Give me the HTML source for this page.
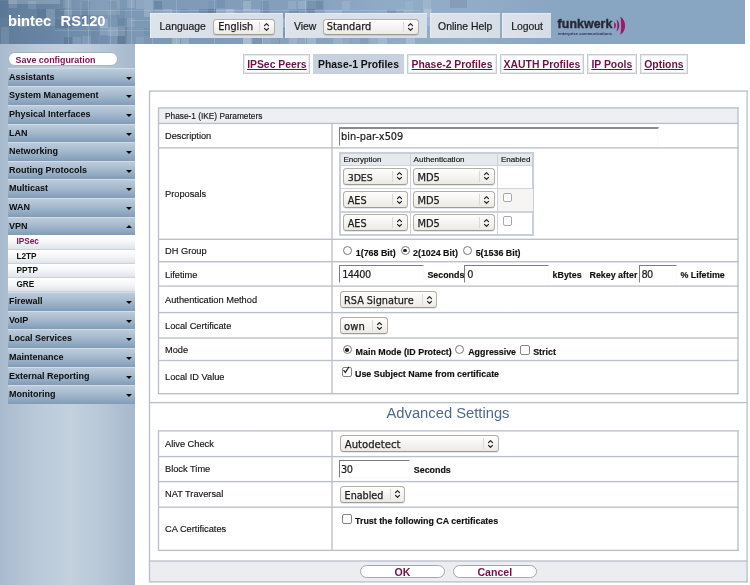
<!DOCTYPE html>
<html>
<head>
<meta charset="utf-8">
<title>bintec RS120 - IPSec Phase-1 Profiles</title>
<style>
html,body{margin:0;padding:0;}
html{background:#fff;}
body{width:750px;height:585px;position:relative;overflow:hidden;background:#fff;will-change:transform;font-family:"Liberation Sans",sans-serif;color:#1a1a1a;}
.abs{position:absolute;}
/* header */
#hdr{position:absolute;left:0;top:0;width:745px;height:44px;background:#88a5c2;overflow:hidden;}
#hdrtex{position:absolute;left:0;top:0;width:560px;height:44px;overflow:hidden;background:linear-gradient(90deg,#5f7c9a 0,#6886a4 50px,#7a97b4 115px,#84a0bd 300px,#8faac5 380px,#92adc7 470px,#88a5c2 560px);}
#hdrtex i{position:absolute;display:block;}
#brand{position:absolute;left:8px;top:12.6px;word-spacing:0.6px;font-size:14.7px;font-weight:bold;color:#fff;white-space:pre;line-height:17px;}
.tb{position:absolute;top:12.6px;height:25px;background:linear-gradient(90deg,#dce3eb,#d5dde7);border-top:1px solid #e8edf3;border-left:1px solid #e8edf3;box-sizing:border-box;font-size:10.4px;color:#1a1a1a;-webkit-text-stroke:0.2px #1a1a1a;line-height:25px;white-space:nowrap;}
.sel{position:absolute;box-sizing:border-box;border:1px solid #b3aea6;border-bottom-color:#a09b93;border-radius:3.5px;box-shadow:0 0.8px 0.6px rgba(0,0,0,0.12);background:linear-gradient(#fefefd,#eceae6);font-family:"DejaVu Sans","Liberation Sans",sans-serif;color:#1c1c1c;-webkit-text-stroke:0.25px #1c1c1c;white-space:nowrap;}
.sel.s2{height:17px;font-size:9.7px;line-height:17.2px;padding-left:3.5px;}
.sel b{position:absolute;right:0;top:2px;bottom:2px;width:13.4px;border-left:1px solid #dcd9d3;}
.sel svg{position:absolute;right:4.3px;top:50%;margin-top:-4px;width:5px;height:8px;overflow:visible;}
/* sidebar */
#side{position:absolute;left:0;top:44px;width:135px;height:541px;background:linear-gradient(90deg,#a8bacd 0,#b9c9d9 35px,#c3d1de 70px,#b8c8d8 100px,#a6b8cc 135px);}
#save{position:absolute;left:8px;top:8.4px;width:110px;height:13.2px;border:1px solid #aab4c0;border-radius:7px;background:#fff;box-sizing:border-box;font-size:8.9px;font-weight:bold;color:#781050;line-height:14.2px;padding-left:6.6px;}
.mi{position:absolute;left:8px;width:127px;height:18px;background:linear-gradient(#bccbdb 0,#a5b9cd 45%,#819cb8 100%);border-top:1px solid #d3dde8;box-sizing:border-box;font-size:9px;font-weight:bold;color:#0c0c0c;line-height:17.8px;padding-left:1px;white-space:nowrap;}
.mi:after{content:"";position:absolute;right:2.6px;top:8px;border:3px solid transparent;border-top:3px solid #0a0a0a;border-bottom:0;}
.mi.up:after{border-top:0;border-bottom:3px solid #0a0a0a;top:7.5px;}
.si{position:absolute;left:8px;width:127px;height:14px;background:linear-gradient(#ffffff 0,#f6f7f8 45%,#e0e4e9 100%);border-bottom:1px solid #ccd2da;box-sizing:border-box;font-size:8.25px;font-weight:bold;color:#111;line-height:13.2px;padding-left:8.4px;}
.si.act{color:#801456;}
/* main */
.tab{position:absolute;top:54px;height:20px;box-sizing:border-box;border:1px solid #c6cbd3;box-shadow:inset 0 0 0 1px rgba(198,203,211,0.4);background:#fff;font-size:10.4px;font-weight:bold;color:#701048;text-decoration:underline;line-height:19px;text-align:center;white-space:nowrap;}
.tab.act{background:#c8d2de;border-color:#c8d2de;box-shadow:none;color:#111;text-decoration:none;}
.ln{position:absolute;background:#c4ccd8;}
.lbl{position:absolute;left:165px;font-size:9.25px;color:#141414;-webkit-text-stroke:0.15px #141414;white-space:nowrap;line-height:12px;}
.bt{position:absolute;font-size:8.9px;font-weight:bold;color:#111;-webkit-text-stroke:0.15px #111;white-space:nowrap;line-height:12px;}
.inp{position:absolute;box-sizing:border-box;height:18px;border-top:1.5px solid #7d7d7d;border-left:1.5px solid #7d7d7d;border-right:1px solid #fbfbfb;border-bottom:1px solid #fbfbfb;background:#fff;font-family:"DejaVu Sans","Liberation Sans",sans-serif;font-size:9.8px;line-height:15px;padding-left:2px;color:#1c1c1c;-webkit-text-stroke:0.2px #1c1c1c;}
.rad{position:absolute;width:9px;height:9px;border:1px solid #787878;border-radius:50%;box-sizing:border-box;background:#fff;}
.rad.on:after{content:"";position:absolute;left:1.7px;top:1.7px;width:3.6px;height:3.6px;border-radius:50%;background:#222;}
.chk{position:absolute;width:9.4px;height:9.4px;border:1px solid #858585;border-radius:2px;box-sizing:border-box;background:#fff;}
.btn{position:absolute;top:565.4px;height:12.8px;box-sizing:border-box;border:1px solid #a2a8b2;border-radius:7px;background:#fff;font-size:10.6px;font-weight:bold;color:#701048;text-align:center;line-height:12.4px;}
</style>
</head>
<body>
<!-- HEADER -->
<div id="hdr">
  <div id="hdrtex"><i style="left:0px;top:1px;width:8px;height:17px;background:rgba(30,50,80,0.06)"></i><i style="left:1px;top:27px;width:8px;height:17px;background:rgba(255,255,255,0.10)"></i><i style="left:9px;top:0px;width:8px;height:8px;background:rgba(255,255,255,0.12)"></i><i style="left:9px;top:18px;width:17px;height:8px;background:rgba(255,255,255,0.15)"></i><i style="left:19px;top:19px;width:8px;height:8px;background:rgba(255,255,255,0.15)"></i><i style="left:28px;top:1px;width:8px;height:8px;background:rgba(255,255,255,0.11)"></i><i style="left:28px;top:18px;width:8px;height:8px;background:rgba(255,255,255,0.09)"></i><i style="left:37px;top:9px;width:9px;height:9px;background:rgba(30,50,80,0.12)"></i><i style="left:46px;top:9px;width:9px;height:17px;background:rgba(255,255,255,0.12)"></i><i style="left:55px;top:9px;width:9px;height:8px;background:rgba(30,50,80,0.09)"></i><i style="left:55px;top:19px;width:17px;height:9px;background:rgba(30,50,80,0.14)"></i><i style="left:63px;top:0px;width:8px;height:8px;background:rgba(255,255,255,0.08)"></i><i style="left:64px;top:10px;width:8px;height:9px;background:rgba(255,255,255,0.08)"></i><i style="left:64px;top:37px;width:8px;height:17px;background:rgba(30,50,80,0.14)"></i><i style="left:72px;top:0px;width:8px;height:17px;background:rgba(30,50,80,0.06)"></i><i style="left:72px;top:9px;width:8px;height:9px;background:rgba(30,50,80,0.06)"></i><i style="left:73px;top:37px;width:8px;height:17px;background:rgba(255,255,255,0.10)"></i><i style="left:82px;top:1px;width:8px;height:17px;background:rgba(30,50,80,0.10)"></i><i style="left:81px;top:9px;width:8px;height:9px;background:rgba(30,50,80,0.10)"></i><i style="left:82px;top:18px;width:9px;height:8px;background:rgba(30,50,80,0.15)"></i><i style="left:82px;top:36px;width:9px;height:8px;background:rgba(255,255,255,0.10)"></i><i style="left:91px;top:28px;width:8px;height:17px;background:rgba(30,50,80,0.07)"></i><i style="left:100px;top:19px;width:8px;height:9px;background:rgba(255,255,255,0.21)"></i><i style="left:100px;top:27px;width:8px;height:8px;background:rgba(255,255,255,0.11)"></i><i style="left:100px;top:36px;width:9px;height:8px;background:rgba(30,50,80,0.06)"></i><i style="left:109px;top:1px;width:8px;height:17px;background:rgba(30,50,80,0.09)"></i><i style="left:108px;top:10px;width:8px;height:8px;background:rgba(255,255,255,0.08)"></i><i style="left:108px;top:27px;width:17px;height:9px;background:rgba(255,255,255,0.15)"></i><i style="left:117px;top:9px;width:8px;height:17px;background:rgba(30,50,80,0.07)"></i><i style="left:118px;top:18px;width:9px;height:8px;background:rgba(30,50,80,0.09)"></i><i style="left:118px;top:27px;width:9px;height:17px;background:rgba(30,50,80,0.14)"></i><i style="left:117px;top:36px;width:8px;height:17px;background:rgba(30,50,80,0.12)"></i><i style="left:127px;top:0px;width:8px;height:8px;background:rgba(255,255,255,0.14)"></i><i style="left:127px;top:18px;width:8px;height:9px;background:rgba(255,255,255,0.08)"></i><i style="left:136px;top:0px;width:8px;height:9px;background:rgba(255,255,255,0.15)"></i><i style="left:136px;top:37px;width:8px;height:17px;background:rgba(255,255,255,0.08)"></i><i style="left:144px;top:0px;width:8px;height:17px;background:rgba(255,255,255,0.17)"></i><i style="left:144px;top:28px;width:9px;height:8px;background:rgba(30,50,80,0.07)"></i><i style="left:154px;top:1px;width:8px;height:8px;background:rgba(30,50,80,0.16)"></i><i style="left:154px;top:10px;width:9px;height:9px;background:rgba(255,255,255,0.12)"></i><i style="left:153px;top:18px;width:8px;height:17px;background:rgba(255,255,255,0.16)"></i><i style="left:163px;top:9px;width:9px;height:9px;background:rgba(255,255,255,0.18)"></i><i style="left:171px;top:10px;width:17px;height:9px;background:rgba(255,255,255,0.07)"></i><i style="left:171px;top:27px;width:8px;height:8px;background:rgba(30,50,80,0.06)"></i><i style="left:172px;top:37px;width:8px;height:17px;background:rgba(255,255,255,0.22)"></i><i style="left:180px;top:9px;width:8px;height:8px;background:rgba(30,50,80,0.08)"></i><i style="left:181px;top:37px;width:8px;height:9px;background:rgba(255,255,255,0.17)"></i><i style="left:190px;top:18px;width:8px;height:8px;background:rgba(255,255,255,0.10)"></i><i style="left:199px;top:9px;width:17px;height:9px;background:rgba(30,50,80,0.16)"></i><i style="left:208px;top:1px;width:9px;height:8px;background:rgba(30,50,80,0.05)"></i><i style="left:208px;top:9px;width:8px;height:17px;background:rgba(30,50,80,0.12)"></i><i style="left:208px;top:28px;width:8px;height:8px;background:rgba(255,255,255,0.06)"></i><i style="left:217px;top:0px;width:8px;height:8px;background:rgba(30,50,80,0.08)"></i><i style="left:216px;top:9px;width:17px;height:8px;background:rgba(255,255,255,0.14)"></i><i style="left:217px;top:18px;width:8px;height:8px;background:rgba(255,255,255,0.07)"></i><i style="left:216px;top:28px;width:9px;height:9px;background:rgba(30,50,80,0.06)"></i><i style="left:226px;top:9px;width:9px;height:8px;background:rgba(255,255,255,0.19)"></i><i style="left:235px;top:9px;width:8px;height:8px;background:rgba(255,255,255,0.08)"></i><i style="left:234px;top:19px;width:17px;height:8px;background:rgba(30,50,80,0.12)"></i><i style="left:234px;top:27px;width:17px;height:8px;background:rgba(30,50,80,0.11)"></i><i style="left:243px;top:1px;width:8px;height:9px;background:rgba(255,255,255,0.18)"></i><i style="left:243px;top:9px;width:17px;height:8px;background:rgba(255,255,255,0.17)"></i><i style="left:244px;top:18px;width:8px;height:9px;background:rgba(255,255,255,0.18)"></i><i style="left:243px;top:28px;width:8px;height:17px;background:rgba(255,255,255,0.17)"></i><i style="left:243px;top:37px;width:9px;height:17px;background:rgba(255,255,255,0.18)"></i><i style="left:253px;top:19px;width:17px;height:8px;background:rgba(30,50,80,0.16)"></i><i style="left:253px;top:28px;width:8px;height:8px;background:rgba(255,255,255,0.08)"></i><i style="left:253px;top:37px;width:9px;height:8px;background:rgba(30,50,80,0.08)"></i><i style="left:261px;top:1px;width:8px;height:17px;background:rgba(30,50,80,0.09)"></i><i style="left:262px;top:10px;width:9px;height:8px;background:rgba(30,50,80,0.05)"></i><i style="left:262px;top:18px;width:8px;height:8px;background:rgba(30,50,80,0.08)"></i><i style="left:261px;top:28px;width:8px;height:9px;background:rgba(30,50,80,0.13)"></i><i style="left:262px;top:36px;width:9px;height:8px;background:rgba(255,255,255,0.10)"></i><i style="left:270px;top:18px;width:8px;height:17px;background:rgba(30,50,80,0.15)"></i><i style="left:271px;top:28px;width:17px;height:17px;background:rgba(30,50,80,0.07)"></i><i style="left:271px;top:37px;width:8px;height:8px;background:rgba(255,255,255,0.11)"></i><i style="left:279px;top:18px;width:8px;height:9px;background:rgba(255,255,255,0.17)"></i><i style="left:280px;top:37px;width:17px;height:8px;background:rgba(255,255,255,0.11)"></i><i style="left:288px;top:1px;width:8px;height:8px;background:rgba(255,255,255,0.11)"></i><i style="left:289px;top:10px;width:9px;height:8px;background:rgba(30,50,80,0.13)"></i><i style="left:289px;top:19px;width:8px;height:17px;background:rgba(255,255,255,0.18)"></i><i style="left:289px;top:37px;width:8px;height:8px;background:rgba(255,255,255,0.10)"></i><i style="left:298px;top:1px;width:9px;height:8px;background:rgba(255,255,255,0.13)"></i><i style="left:297px;top:9px;width:17px;height:17px;background:rgba(30,50,80,0.08)"></i><i style="left:297px;top:18px;width:8px;height:17px;background:rgba(255,255,255,0.18)"></i><i style="left:298px;top:27px;width:8px;height:9px;background:rgba(30,50,80,0.12)"></i><i style="left:297px;top:36px;width:9px;height:8px;background:rgba(255,255,255,0.10)"></i><i style="left:306px;top:1px;width:17px;height:9px;background:rgba(30,50,80,0.12)"></i><i style="left:307px;top:9px;width:8px;height:8px;background:rgba(30,50,80,0.13)"></i><i style="left:307px;top:19px;width:17px;height:17px;background:rgba(255,255,255,0.10)"></i><i style="left:307px;top:27px;width:8px;height:9px;background:rgba(30,50,80,0.09)"></i><i style="left:307px;top:36px;width:9px;height:8px;background:rgba(255,255,255,0.22)"></i><i style="left:316px;top:0px;width:8px;height:9px;background:rgba(30,50,80,0.08)"></i><i style="left:315px;top:18px;width:8px;height:8px;background:rgba(30,50,80,0.06)"></i><i style="left:316px;top:27px;width:8px;height:8px;background:rgba(255,255,255,0.20)"></i><i style="left:325px;top:10px;width:8px;height:17px;background:rgba(255,255,255,0.17)"></i><i style="left:325px;top:27px;width:8px;height:8px;background:rgba(255,255,255,0.07)"></i><i style="left:333px;top:10px;width:9px;height:17px;background:rgba(255,255,255,0.17)"></i><i style="left:334px;top:18px;width:17px;height:8px;background:rgba(255,255,255,0.18)"></i><i style="left:333px;top:37px;width:17px;height:8px;background:rgba(255,255,255,0.13)"></i><i style="left:342px;top:1px;width:8px;height:9px;background:rgba(255,255,255,0.11)"></i><i style="left:343px;top:37px;width:8px;height:8px;background:rgba(30,50,80,0.06)"></i><i style="left:352px;top:27px;width:17px;height:8px;background:rgba(255,255,255,0.21)"></i><i style="left:360px;top:36px;width:8px;height:17px;background:rgba(30,50,80,0.08)"></i><i style="left:369px;top:18px;width:17px;height:8px;background:rgba(30,50,80,0.08)"></i><i style="left:370px;top:27px;width:17px;height:17px;background:rgba(255,255,255,0.08)"></i><i style="left:379px;top:19px;width:9px;height:9px;background:rgba(255,255,255,0.10)"></i><i style="left:378px;top:28px;width:8px;height:8px;background:rgba(255,255,255,0.08)"></i><i style="left:378px;top:37px;width:9px;height:8px;background:rgba(255,255,255,0.10)"></i><i style="left:387px;top:10px;width:17px;height:8px;background:rgba(30,50,80,0.15)"></i><i style="left:388px;top:28px;width:8px;height:8px;background:rgba(255,255,255,0.20)"></i><i style="left:396px;top:9px;width:9px;height:8px;background:rgba(255,255,255,0.11)"></i><i style="left:397px;top:27px;width:8px;height:8px;background:rgba(30,50,80,0.09)"></i><i style="left:405px;top:1px;width:8px;height:17px;background:rgba(255,255,255,0.07)"></i><i style="left:406px;top:19px;width:8px;height:8px;background:rgba(255,255,255,0.10)"></i><i style="left:406px;top:36px;width:9px;height:17px;background:rgba(255,255,255,0.20)"></i><i style="left:423px;top:0px;width:8px;height:17px;background:rgba(255,255,255,0.12)"></i><i style="left:424px;top:9px;width:8px;height:17px;background:rgba(255,255,255,0.16)"></i><i style="left:450px;top:0px;width:17px;height:8px;background:rgba(30,50,80,0.12)"></i><i style="left:68px;top:0px;width:1px;height:44px;background:rgba(255,255,255,0.16)"></i><i style="left:88px;top:0px;width:1px;height:44px;background:rgba(255,255,255,0.16)"></i><i style="left:110px;top:0px;width:1px;height:44px;background:rgba(255,255,255,0.16)"></i><i style="left:131px;top:0px;width:1px;height:44px;background:rgba(255,255,255,0.16)"></i><i style="left:152px;top:0px;width:1px;height:44px;background:rgba(255,255,255,0.16)"></i><i style="left:176px;top:0px;width:1px;height:44px;background:rgba(255,255,255,0.16)"></i><i style="left:214px;top:0px;width:1px;height:44px;background:rgba(255,255,255,0.16)"></i><i style="left:262px;top:0px;width:1px;height:44px;background:rgba(255,255,255,0.16)"></i><i style="left:305px;top:0px;width:1px;height:44px;background:rgba(255,255,255,0.16)"></i><i style="left:55px;top:30px;width:275px;height:1px;background:rgba(255,255,255,0.14)"></i><i style="left:60px;top:10px;width:360px;height:1px;background:rgba(255,255,255,0.14)"></i><i style="left:130px;top:20px;width:170px;height:1px;background:rgba(255,255,255,0.14)"></i><i style="left:8px;top:0px;width:52px;height:4px;background:rgba(255,255,255,0.18)"></i><i style="left:65px;top:0px;width:55px;height:15px;background:rgba(255,255,255,0.10)"></i></div>
  <div id="brand">bintec  RS120</div>
  <div class="tb" style="left:149.6px;width:133px;padding-left:9px;">Language
    <div class="sel" style="left:62.6px;top:5px;width:61.4px;height:16px;font-size:9.7px;line-height:14px;padding-left:4px;">English<b></b><svg viewBox="0 0 5 8"><use href="#ud"/></svg></div>
  </div>
  <div class="tb" style="left:285.3px;width:142px;padding-left:7.6px;">View
    <div class="sel" style="left:36.4px;top:5px;width:96px;height:16px;font-size:9.8px;line-height:14px;padding-left:3px;">Standard<b></b><svg viewBox="0 0 5 8"><use href="#ud"/></svg></div>
  </div>
  <div class="tb" style="left:429.6px;width:70.3px;text-align:center;">Online Help</div>
  <div class="tb" style="left:502px;width:49.2px;text-align:center;">Logout</div>
  <div class="abs" style="left:557.6px;top:17.4px;font-size:12.4px;font-weight:bold;color:#262636;letter-spacing:0.05px;-webkit-text-stroke:0.35px #262636;line-height:14px;">funkwerk</div>
  <svg class="abs" style="left:610px;top:12px;" width="20" height="26" viewBox="610 12 20 26"><g fill="#9a1c69"><path d="M614 22C616.7 23.4 616.7 27.5 614 28.9C614.3 27.5 614.3 23.4 614 22Z"/><path d="M616.4 19.6C620.3 22 620.3 29.2 616.4 31.6C617.6 29.2 617.6 22 616.4 19.6Z"/><path d="M620.3 16.4C626.7 20.1 626.7 31.1 620.3 34.8C621.4 31.1 621.4 20.1 620.3 16.4Z"/></g></svg>
  <div class="abs" style="left:558px;top:31px;font-size:4.05px;font-weight:bold;color:#27305a;line-height:5px;white-space:nowrap;letter-spacing:0.05px;">enterprise communications</div>
</div>

<!-- SIDEBAR -->
<div id="side">
  <div id="save">Save configuration</div>
  <div class="mi" style="top:23.70px;height:18.625px;">Assistants</div>
  <div class="mi" style="top:42.33px;height:18.625px;">System Management</div>
  <div class="mi" style="top:60.95px;height:18.625px;">Physical Interfaces</div>
  <div class="mi" style="top:79.58px;height:18.625px;">LAN</div>
  <div class="mi" style="top:98.20px;height:18.625px;">Networking</div>
  <div class="mi" style="top:116.83px;height:18.625px;">Routing Protocols</div>
  <div class="mi" style="top:135.45px;height:18.625px;">Multicast</div>
  <div class="mi" style="top:154.07px;height:18.625px;">WAN</div>
  <div class="mi up" style="top:172.70px;height:18.625px;">VPN</div>
  <div class="si act" style="top:191.32px;height:14.2px;">IPSec</div>
  <div class="si" style="top:205.52px;height:14.2px;">L2TP</div>
  <div class="si" style="top:219.72px;height:14.2px;">PPTP</div>
  <div class="si" style="top:233.92px;height:14.2px;">GRE</div>
  <div class="mi" style="top:248.12px;height:18.625px;">Firewall</div>
  <div class="mi" style="top:266.75px;height:18.625px;">VoIP</div>
  <div class="mi" style="top:285.37px;height:18.625px;">Local Services</div>
  <div class="mi" style="top:304.00px;height:18.625px;">Maintenance</div>
  <div class="mi" style="top:322.62px;height:18.625px;">External Reporting</div>
  <div class="mi" style="top:341.25px;height:18.625px;">Monitoring</div>
</div>

<!-- MAIN -->
<svg width="0" height="0" style="position:absolute"><defs><path id="ud" d="M0.5 2.6L2.5 0.6L4.5 2.6M0.5 5.4L2.5 7.4L4.5 5.4" fill="none" stroke="#1e1e1e" stroke-width="1.15" stroke-linecap="round" stroke-linejoin="round"/></defs></svg>
<div id="main">
  <!-- tabs -->
  <div class="tab" style="left:243.4px;width:67px;">IPSec Peers</div>
  <div class="tab act" style="left:312.6px;width:91.8px;">Phase-1 Profiles</div>
  <div class="tab" style="left:406.8px;width:90.4px;">Phase-2 Profiles</div>
  <div class="tab" style="left:499.8px;width:84.4px;">XAUTH Profiles</div>
  <div class="tab" style="left:586.8px;width:50px;">IP Pools</div>
  <div class="tab" style="left:639.6px;width:48.6px;">Options</div>

  <!--FRAME-->
  <div class="abs" style="left:150px;top:561px;width:597px;height:21px;background:#ecedf0;"></div>
  <div class="abs" style="left:158px;top:108px;width:580px;height:15px;background:#eeeff2;"></div>
  <div class="abs" style="left:149px;top:90px;width:599px;height:2px;background:linear-gradient(180deg,rgba(186,191,201,0.58) 0px,rgba(186,191,201,0.58) 1px,rgba(186,191,201,0.77) 1px,rgba(186,191,201,0.77) 2px)"></div>
  <div class="abs" style="left:149px;top:581px;width:599px;height:2px;background:linear-gradient(180deg,rgba(186,191,201,0.77) 0px,rgba(186,191,201,0.77) 1px,rgba(186,191,201,0.57) 1px,rgba(186,191,201,0.57) 2px)"></div>
  <div class="abs" style="left:148px;top:91px;width:3px;height:491px;background:linear-gradient(90deg,rgba(186,191,201,0.18) 0px,rgba(186,191,201,0.18) 1px,rgba(186,191,201,1.00) 1px,rgba(186,191,201,1.00) 2px,rgba(186,191,201,0.18) 2px,rgba(186,191,201,0.18) 3px)"></div>
  <div class="abs" style="left:746px;top:91px;width:2px;height:491px;background:linear-gradient(90deg,rgba(186,191,201,0.57) 0px,rgba(186,191,201,0.57) 1px,rgba(186,191,201,0.77) 1px,rgba(186,191,201,0.77) 2px)"></div>
  <div class="abs" style="left:150px;top:401px;width:597px;height:3px;background:linear-gradient(180deg,rgba(186,191,201,0.07) 0px,rgba(186,191,201,0.07) 1px,rgba(186,191,201,1.00) 1px,rgba(186,191,201,1.00) 2px,rgba(186,191,201,0.28) 2px,rgba(186,191,201,0.28) 3px)"></div>
  <div class="abs" style="left:150px;top:560px;width:597px;height:2px;background:linear-gradient(180deg,rgba(186,191,201,0.67) 0px,rgba(186,191,201,0.67) 1px,rgba(186,191,201,0.67) 1px,rgba(186,191,201,0.67) 2px)"></div>
  <div class="abs" style="left:158px;top:107px;width:581px;height:2px;background:linear-gradient(180deg,rgba(186,191,201,0.77) 0px,rgba(186,191,201,0.77) 1px,rgba(186,191,201,0.58) 1px,rgba(186,191,201,0.58) 2px)"></div>
  <div class="abs" style="left:158px;top:122px;width:581px;height:3px;background:linear-gradient(180deg,rgba(186,191,201,0.27) 0px,rgba(186,191,201,0.27) 1px,rgba(186,191,201,1.00) 1px,rgba(186,191,201,1.00) 2px,rgba(186,191,201,0.08) 2px,rgba(186,191,201,0.08) 3px)"></div>
  <div class="abs" style="left:158px;top:147px;width:581px;height:2px;background:linear-gradient(180deg,rgba(186,191,201,0.78) 0px,rgba(186,191,201,0.78) 1px,rgba(186,191,201,0.58) 1px,rgba(186,191,201,0.58) 2px)"></div>
  <div class="abs" style="left:158px;top:238px;width:581px;height:2px;background:linear-gradient(180deg,rgba(186,191,201,0.38) 0px,rgba(186,191,201,0.38) 1px,rgba(186,191,201,0.98) 1px,rgba(186,191,201,0.98) 2px)"></div>
  <div class="abs" style="left:158px;top:261px;width:581px;height:2px;background:linear-gradient(180deg,rgba(186,191,201,0.98) 0px,rgba(186,191,201,0.98) 1px,rgba(186,191,201,0.38) 1px,rgba(186,191,201,0.38) 2px)"></div>
  <div class="abs" style="left:158px;top:285px;width:581px;height:2px;background:linear-gradient(180deg,rgba(186,191,201,0.57) 0px,rgba(186,191,201,0.57) 1px,rgba(186,191,201,0.78) 1px,rgba(186,191,201,0.78) 2px)"></div>
  <div class="abs" style="left:158px;top:311px;width:581px;height:3px;background:linear-gradient(180deg,rgba(186,191,201,0.07) 0px,rgba(186,191,201,0.07) 1px,rgba(186,191,201,1.00) 1px,rgba(186,191,201,1.00) 2px,rgba(186,191,201,0.28) 2px,rgba(186,191,201,0.28) 3px)"></div>
  <div class="abs" style="left:158px;top:337px;width:581px;height:2px;background:linear-gradient(180deg,rgba(186,191,201,0.68) 0px,rgba(186,191,201,0.68) 1px,rgba(186,191,201,0.68) 1px,rgba(186,191,201,0.68) 2px)"></div>
  <div class="abs" style="left:158px;top:359px;width:581px;height:3px;background:linear-gradient(180deg,rgba(186,191,201,0.18) 0px,rgba(186,191,201,0.18) 1px,rgba(186,191,201,1.00) 1px,rgba(186,191,201,1.00) 2px,rgba(186,191,201,0.18) 2px,rgba(186,191,201,0.18) 3px)"></div>
  <div class="abs" style="left:158px;top:393px;width:581px;height:2px;background:linear-gradient(180deg,rgba(186,191,201,0.98) 0px,rgba(186,191,201,0.98) 1px,rgba(186,191,201,0.38) 1px,rgba(186,191,201,0.38) 2px)"></div>
  <div class="abs" style="left:157px;top:108px;width:3px;height:286px;background:linear-gradient(90deg,rgba(186,191,201,0.18) 0px,rgba(186,191,201,0.18) 1px,rgba(186,191,201,1.00) 1px,rgba(186,191,201,1.00) 2px,rgba(186,191,201,0.18) 2px,rgba(186,191,201,0.18) 3px)"></div>
  <div class="abs" style="left:737px;top:108px;width:2px;height:286px;background:linear-gradient(90deg,rgba(186,191,201,0.67) 0px,rgba(186,191,201,0.67) 1px,rgba(186,191,201,0.67) 1px,rgba(186,191,201,0.67) 2px)"></div>
  <div class="abs" style="left:331px;top:123px;width:2px;height:271px;background:linear-gradient(90deg,rgba(186,191,201,0.68) 0px,rgba(186,191,201,0.68) 1px,rgba(186,191,201,0.68) 1px,rgba(186,191,201,0.68) 2px)"></div>
  <div class="abs" style="left:158px;top:430px;width:581px;height:2px;background:linear-gradient(180deg,rgba(186,191,201,0.78) 0px,rgba(186,191,201,0.78) 1px,rgba(186,191,201,0.57) 1px,rgba(186,191,201,0.57) 2px)"></div>
  <div class="abs" style="left:158px;top:455px;width:581px;height:3px;background:linear-gradient(180deg,rgba(186,191,201,0.07) 0px,rgba(186,191,201,0.07) 1px,rgba(186,191,201,1.00) 1px,rgba(186,191,201,1.00) 2px,rgba(186,191,201,0.28) 2px,rgba(186,191,201,0.28) 3px)"></div>
  <div class="abs" style="left:158px;top:480px;width:581px;height:3px;background:linear-gradient(180deg,rgba(186,191,201,0.07) 0px,rgba(186,191,201,0.07) 1px,rgba(186,191,201,1.00) 1px,rgba(186,191,201,1.00) 2px,rgba(186,191,201,0.28) 2px,rgba(186,191,201,0.28) 3px)"></div>
  <div class="abs" style="left:158px;top:506px;width:581px;height:2px;background:linear-gradient(180deg,rgba(186,191,201,0.48) 0px,rgba(186,191,201,0.48) 1px,rgba(186,191,201,0.88) 1px,rgba(186,191,201,0.88) 2px)"></div>
  <div class="abs" style="left:158px;top:549px;width:581px;height:3px;background:linear-gradient(180deg,rgba(186,191,201,0.27) 0px,rgba(186,191,201,0.27) 1px,rgba(186,191,201,1.00) 1px,rgba(186,191,201,1.00) 2px,rgba(186,191,201,0.07) 2px,rgba(186,191,201,0.07) 3px)"></div>
  <div class="abs" style="left:157px;top:431px;width:3px;height:120px;background:linear-gradient(90deg,rgba(186,191,201,0.18) 0px,rgba(186,191,201,0.18) 1px,rgba(186,191,201,1.00) 1px,rgba(186,191,201,1.00) 2px,rgba(186,191,201,0.18) 2px,rgba(186,191,201,0.18) 3px)"></div>
  <div class="abs" style="left:737px;top:431px;width:2px;height:120px;background:linear-gradient(90deg,rgba(186,191,201,0.67) 0px,rgba(186,191,201,0.67) 1px,rgba(186,191,201,0.67) 1px,rgba(186,191,201,0.67) 2px)"></div>
  <div class="abs" style="left:331px;top:431px;width:2px;height:120px;background:linear-gradient(90deg,rgba(186,191,201,0.68) 0px,rgba(186,191,201,0.68) 1px,rgba(186,191,201,0.68) 1px,rgba(186,191,201,0.68) 2px)"></div>
  <!--/FRAME-->

  <div class="lbl" style="top:109.6px;font-size:8.3px;">Phase-1 (IKE) Parameters</div>
  <div class="lbl" style="top:130.1px;">Description</div>
  <div class="lbl" style="top:188.1px;">Proposals</div>
  <div class="lbl" style="top:245.1px;">DH Group</div>
  <div class="lbl" style="top:268.8px;">Lifetime</div>
  <div class="lbl" style="top:294.0px;">Authentication Method</div>
  <div class="lbl" style="top:320.4px;">Local Certificate</div>
  <div class="lbl" style="top:343.5px;">Mode</div>
  <div class="lbl" style="top:370.5px;">Local ID Value</div>

  <div class="inp" style="left:338.8px;top:126.6px;width:320px;height:19px;padding-left:1.2px;border-top:2px solid #8c8c8c;line-height:15.4px;">bin-par-x509</div>

  <!-- proposals -->
  <div class="abs" style="left:339px;top:152px;width:195px;height:84px;box-sizing:border-box;border:2px solid #c9cfd9;background:#fff;"></div>
  <div class="abs" style="left:341px;top:154px;width:191px;height:11px;background:#e6e9ee;"></div>
  <div class="ln" style="left:341px;top:165px;width:191px;height:1px;background:#cdd3dc;"></div>
  <div class="ln" style="left:341px;top:187.6px;width:191px;height:1.5px;background:#cdd3dc;"></div>
  <div class="ln" style="left:341px;top:211px;width:191px;height:1.5px;background:#cdd3dc;"></div>
  <div class="ln" style="left:409.6px;top:154px;width:1.5px;height:80px;background:#cdd3dc;"></div>
  <div class="ln" style="left:496.6px;top:154px;width:1.5px;height:80px;background:#cdd3dc;"></div>
  <div class="abs" style="left:497.8px;top:188.8px;width:35px;height:22.4px;background:#f6f5f4;"></div>
  <div class="lbl" style="left:343.5px;top:154.2px;font-size:8.05px;">Encryption</div>
  <div class="lbl" style="left:413.6px;top:154.2px;font-size:8.05px;">Authentication</div>
  <div class="lbl" style="left:501px;top:154.2px;font-size:8.05px;">Enabled</div>
  <div class="sel s2" style="left:343.2px;top:167.8px;width:64.5px;font-size:9.4px;">3DES<b></b><svg viewBox="0 0 5 8"><use href="#ud"/></svg></div>
  <div class="sel s2" style="left:413px;top:167.8px;width:81.5px;font-size:9.9px;">MD5<b></b><svg viewBox="0 0 5 8"><use href="#ud"/></svg></div>
  <div class="sel s2" style="left:343.2px;top:191.1px;width:64.5px;">AES<b></b><svg viewBox="0 0 5 8"><use href="#ud"/></svg></div>
  <div class="sel s2" style="left:413px;top:191.1px;width:81.5px;font-size:9.9px;">MD5<b></b><svg viewBox="0 0 5 8"><use href="#ud"/></svg></div>
  <div class="sel s2" style="left:343.2px;top:214.4px;width:64.5px;">AES<b></b><svg viewBox="0 0 5 8"><use href="#ud"/></svg></div>
  <div class="sel s2" style="left:413px;top:214.4px;width:81.5px;font-size:9.9px;">MD5<b></b><svg viewBox="0 0 5 8"><use href="#ud"/></svg></div>
  <div class="chk" style="left:502.9px;top:193.1px;border-color:#a8a8a8;"></div>
  <div class="chk" style="left:502.9px;top:216.4px;border-color:#a8a8a8;"></div>

  <!-- DH group -->
  <div class="rad" style="left:343.0px;top:246.1px;"></div>
  <div class="bt" style="left:355.8px;top:246.8px;">1(768 Bit)</div>
  <div class="rad on" style="left:400.6px;top:246.1px;"></div>
  <div class="bt" style="left:413px;top:246.8px;">2(1024 Bit)</div>
  <div class="rad" style="left:462.6px;top:246.1px;"></div>
  <div class="bt" style="left:475.7px;top:246.8px;">5(1536 Bit)</div>

  <!-- lifetime -->
  <div class="inp" style="left:338.8px;top:265px;width:85px;padding-left:2.4px;line-height:18px;letter-spacing:-0.55px;">14400</div>
  <div class="bt" style="left:427.4px;top:269px;">Seconds</div>
  <div class="inp" style="left:464.3px;top:265px;width:85px;line-height:18px;">0</div>
  <div class="bt" style="left:552.6px;top:269px;">kBytes</div>
  <div class="bt" style="left:589.5px;top:269px;">Rekey after</div>
  <div class="inp" style="left:639.4px;top:265px;width:37.4px;padding-left:1px;line-height:18px;letter-spacing:-0.55px;">80</div>
  <div class="bt" style="left:680.4px;top:269px;">% Lifetime</div>

  <!-- auth method / cert -->
  <div class="sel s2" style="left:339.6px;top:291.4px;width:97.6px;">RSA Signature<b></b><svg viewBox="0 0 5 8"><use href="#ud"/></svg></div>
  <div class="sel s2" style="left:339.6px;top:317.4px;width:48px;font-size:10px;">own<b></b><svg viewBox="0 0 5 8"><use href="#ud"/></svg></div>

  <!-- mode -->
  <div class="rad on" style="left:342.8px;top:345.3px;"></div>
  <div class="bt" style="left:355.6px;top:346px;">Main Mode (ID Protect)</div>
  <div class="rad" style="left:454.8px;top:345.3px;"></div>
  <div class="bt" style="left:468.2px;top:346px;">Aggressive</div>
  <div class="chk" style="left:520.4px;top:345.4px;"></div>
  <div class="bt" style="left:533.2px;top:346px;">Strict</div>

  <!-- local id -->
  <div class="chk on" style="left:342.2px;top:367.4px;"><svg viewBox="0 0 8 8" width="8" height="8" style="position:absolute;left:-1px;top:-2px;"><path d="M1.5 4.2L3.4 6.4L7 0.8" fill="none" stroke="#222" stroke-width="1.2"/></svg></div>
  <div class="bt" style="left:355px;top:368px;">Use Subject Name from certificate</div>

  <!-- advanced -->
  <div class="abs" style="left:149px;top:404px;width:598px;text-align:center;font-size:14.75px;color:#4c6a89;line-height:18px;white-space:nowrap;">Advanced Settings</div>

  <div class="lbl" style="top:438.1px;">Alive Check</div>
  <div class="lbl" style="top:463.4px;">Block Time</div>
  <div class="lbl" style="top:488.4px;">NAT Traversal</div>
  <div class="lbl" style="top:523.0px;">CA Certificates</div>

  <div class="sel s2" style="left:339.6px;top:435.2px;width:159px;font-size:10.1px;padding-left:4.2px;">Autodetect<b></b><svg viewBox="0 0 5 8"><use href="#ud"/></svg></div>
  <div class="inp" style="left:339px;top:460.4px;width:71px;padding-left:1px;line-height:18px;letter-spacing:-0.55px;">30</div>
  <div class="bt" style="left:413.8px;top:464.4px;">Seconds</div>
  <div class="sel s2" style="left:339.6px;top:485.8px;width:65.6px;font-size:9.6px;padding-left:4px;">Enabled<b></b><svg viewBox="0 0 5 8"><use href="#ud"/></svg></div>
  <div class="chk" style="left:342.2px;top:514.2px;"></div>
  <div class="bt" style="left:355px;top:515px;">Trust the following CA certificates</div>

  <div class="btn" style="left:360.4px;width:84.2px;">OK</div>
  <div class="btn" style="left:452.6px;width:84.4px;">Cancel</div>
</div>
</body>
</html>
